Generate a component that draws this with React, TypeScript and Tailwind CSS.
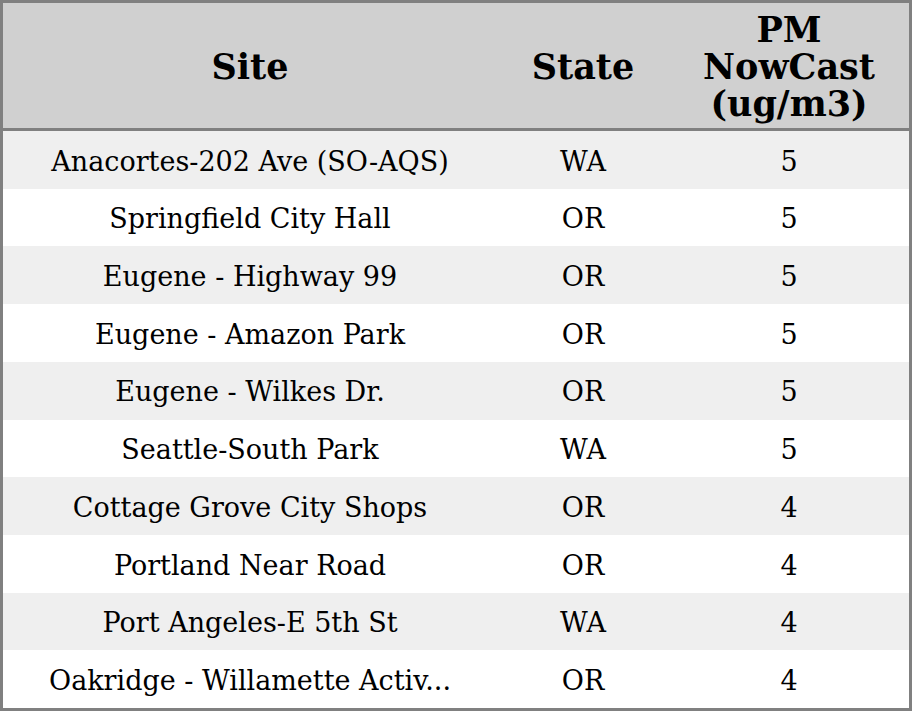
const ROWS: [string, string, number][] = [
  ["Anacortes-202 Ave (SO-AQS)", "WA", 5],
  ["Springfield City Hall", "OR", 5],
  ["Eugene - Highway 99", "OR", 5],
  ["Eugene - Amazon Park", "OR", 5],
  ["Eugene - Wilkes Dr.", "OR", 5],
  ["Seattle-South Park", "WA", 5],
  ["Cottage Grove City Shops", "OR", 4],
  ["Portland Near Road", "OR", 4],
  ["Port Angeles-E 5th St", "WA", 4],
  ["Oakridge - Willamette Activ...", "OR", 4],
];

export default function App() {
  return (
    <div className="h-[711px] w-[912px] bg-white font-['DejaVu_Serif',serif] text-black">
      <div className="flex h-full flex-col border-[3px] border-[#808080]">
        <div className="grid h-[128px] shrink-0 grid-cols-[494px_172px_1fr] items-center border-b-[3px] border-[#808080] bg-[#d0d0d0] pt-[2px] text-center text-[35px] leading-[37px] font-bold">
          <div>Site</div>
          <div>State</div>
          <div>
            PM
            <br />
            NowCast
            <br />
            (ug/m3)
          </div>
        </div>
        <div className="flex flex-1 flex-col">
          {ROWS.map(([site, state, value], i) => (
            <div
              key={site}
              className={`grid flex-1 grid-cols-[494px_172px_1fr] items-center pt-1 text-center text-[27px] ${
                i % 2 === 0 ? "bg-[#efefef]" : "bg-white"
              }`}
            >
              <div className="whitespace-nowrap">{site}</div>
              <div>{state}</div>
              <div>{value}</div>
            </div>
          ))}
        </div>
      </div>
    </div>
  );
}
